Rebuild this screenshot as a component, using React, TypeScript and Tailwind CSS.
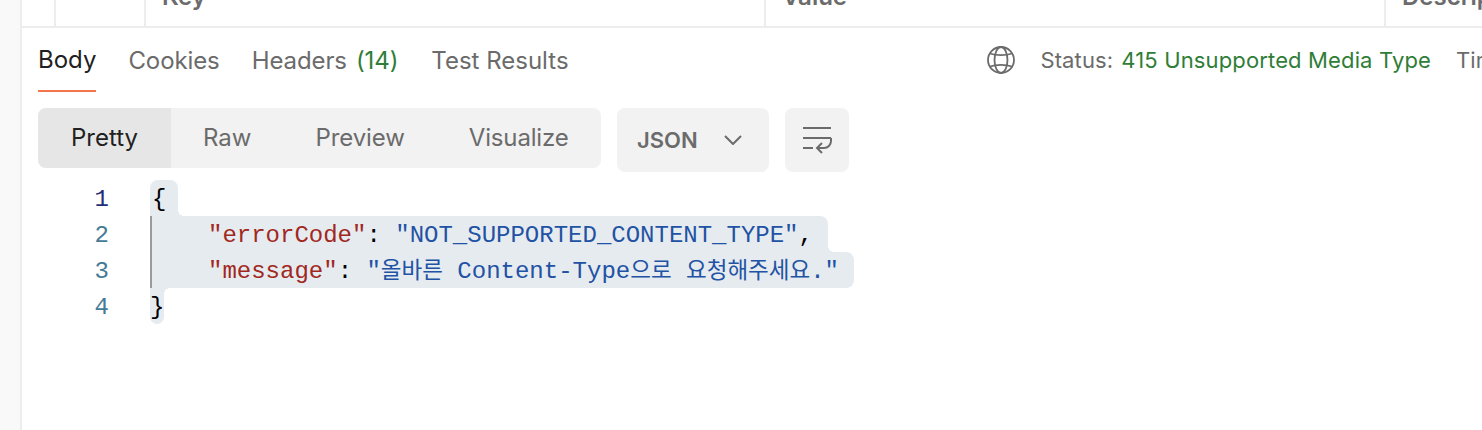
export default function App() {
  const mono = "font-['Liberation_Mono','Noto_Sans_CJK_KR',monospace]";
  const line = "relative h-[36px] pt-[4px] leading-[32px] bg-[#e6ebf0]";
  const concaveBottom = "absolute bottom-0 left-full size-[6px] bg-[radial-gradient(circle_at_100%_0,transparent_6px,#e6ebf0_6px)]";
  const concaveTop = "absolute left-full top-0 size-[6px] bg-[radial-gradient(circle_at_100%_100%,transparent_6px,#e6ebf0_6px)]";
  return (
    <div className="flex h-[430px] w-[1482px] overflow-hidden bg-white font-['Inter',sans-serif] text-[#6b6b6b]">
      <div className="h-full w-[22px] shrink-0 border-r-2 border-[#ededed] bg-[#f9f9f9]" />
      <div className="min-w-0 flex-1">
        <div className="flex h-[28px] overflow-hidden border-b-2 border-[#ededed] text-[24px] font-semibold leading-[29px]">
          <div className="w-[34px] shrink-0 border-r-2 border-[#ededed]" />
          <div className="w-[90px] shrink-0 border-r-2 border-[#ededed]" />
          <div className="-mt-[18px] w-[620px] shrink-0 border-r-2 border-[#ededed] pl-[16px]">Key</div>
          <div className="-mt-[18px] w-[620px] shrink-0 border-r-2 border-[#ededed] pl-[16px]">Value</div>
          <div className="-mt-[18px] shrink-0 pl-[16px]">Description</div>
        </div>

        <div className="flex h-[64px] items-stretch pl-[16px] text-[24px] leading-[29px]">
          <div className="flex h-full items-center border-b-2 border-[#f37549] text-[#212121]">Body</div>
          <div className="ml-[32px] flex h-full items-center tracking-[-0.1px]">Cookies</div>
          <div className="ml-[32px] flex h-full items-center tracking-[-0.1px]">
            Headers <span className="ml-[9px] text-[#2f7d37]">(14)</span>
          </div>
          <div className="ml-[33px] flex h-full items-center">Test Results</div>
          <div className="ml-auto flex h-full items-center text-[22px] tracking-[0.14px] whitespace-nowrap">
            <svg width="30" height="30" viewBox="0 0 30 30" fill="none" stroke="#6b6b6b" strokeWidth="1.8" className="mr-[24px]">
              <circle cx="15" cy="15" r="13" />
              <ellipse cx="15" cy="15" rx="6.5" ry="13" />
              <path d="M4 8.5c6 2.2 16 2.2 22 0M4 21.5c6-2.2 16-2.2 22 0" />
            </svg>
            <span>Status:</span>
            <span className="ml-[8px] text-[#2f7d37]">415 Unsupported Media Type</span>
            <span className="ml-[25px] w-[26px]">Time</span>
          </div>
        </div>

        <div className="mt-[16px] flex items-start pl-[16px] text-[24px]">
          <div className="flex h-[60px] w-[563px] overflow-hidden rounded-[8px] bg-[#f2f2f2] leading-[60px]">
            <div className="w-[133px] bg-[#e6e6e6] text-center text-[#212121]">Pretty</div>
            <div className="ml-[32px]">Raw</div>
            <div className="ml-[64px] tracking-[-0.1px]">Preview</div>
            <div className="ml-[64px] tracking-[-0.15px]">Visualize</div>
          </div>
          <div className="ml-[16px] flex h-[64px] w-[152px] items-center rounded-[8px] bg-[#f2f2f2] pl-[20px] text-[22px] font-semibold">
            JSON
            <svg width="18" height="10" viewBox="0 0 18 10" fill="none" stroke="#6b6b6b" strokeWidth="2" className="ml-[26px]">
              <path d="M1 1l8 8 8-8" />
            </svg>
          </div>
          <div className="ml-[16px] flex h-[64px] w-[64px] items-center justify-center rounded-[8px] bg-[#f2f2f2]">
            <svg width="30" height="28" viewBox="0 0 30 28" fill="none" stroke="#6b6b6b" strokeWidth="2">
              <path d="M1 2h28M1 12h28M1 22h10M29 12v3a7 7 0 0 1-7 7h-7M20 17l-5 5 5 5" />
            </svg>
          </div>
        </div>

        <div className="mt-[8px] flex text-[24px]">
          <div className={`w-[87px] shrink-0 text-right leading-[32px] text-[#457b96] ${mono}`}>
            <div className="h-[36px] pt-[4px] text-[#1f2f78]">1</div>
            <div className="h-[36px] pt-[4px]">2</div>
            <div className="h-[36px] pt-[4px]">3</div>
            <div className="h-[36px] pt-[4px]">4</div>
          </div>
          <div className={`ml-[41px] whitespace-pre text-[#000] ${mono}`}>
            <div className={`${line} w-[28px] rounded-t-[8px] pl-[2px]`}>
              {"{"}
              <div className={concaveBottom} />
            </div>
            <div className={`${line} w-[678px] rounded-tr-[8px] border-l-2 border-[#9a9a9a] pl-[56px]`}>
              <span className="text-[#a12820]">"errorCode"</span>: <span className="text-[#2252a3]">"NOT_SUPPORTED_CONTENT_TYPE"</span>,
              <div className={concaveBottom} />
            </div>
            <div className={`${line} w-[704px] rounded-r-[8px] border-l-2 border-[#9a9a9a] pl-[56px]`}>
              <span className="text-[#a12820]">"message"</span>: <span className="text-[#2252a3]">"<span className="text-[22.5px]">올바른</span> Content-Type<span className="text-[22.5px]">으로</span> <span className="text-[22.5px]">요청해주세요</span>."</span>
            </div>
            <div className={`${line} w-[14px] rounded-b-[8px]`}>
              {"}"}
              <div className={concaveTop} />
            </div>
          </div>
        </div>
      </div>
    </div>
  );
}
